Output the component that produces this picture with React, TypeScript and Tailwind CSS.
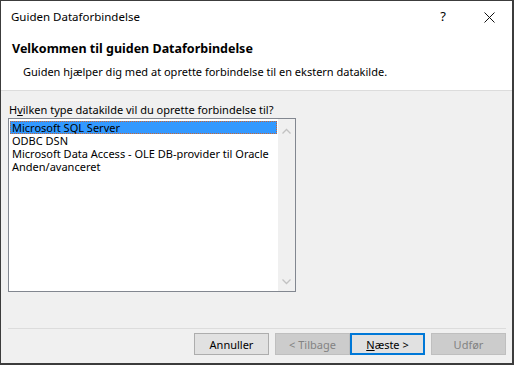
import React from "react";

const font = { fontFamily: '"Noto Sans", "Segoe UI", sans-serif' };

function Chevron({ up }: { up?: boolean }) {
  return (
    <svg width="9" height="6" viewBox="0 0 9 6" className="block">
      <path
        d={up ? "M0.5 5.5 L4.5 1.5 L8.5 5.5" : "M0.5 0.5 L4.5 4.5 L8.5 0.5"}
        fill="none"
        stroke="#c2c2c2"
        strokeWidth="1.3"
      />
    </svg>
  );
}

export default function App() {
  const items = [
    "Microsoft SQL Server",
    "ODBC DSN",
    "Microsoft Data Access - OLE DB-provider til Oracle",
    "Anden/avanceret",
  ];
  return (
    <div
      className="w-[514px] h-[365px] flex flex-col bg-[#f0f0f0] border-l border-t border-r-2 border-b-2 border-[#3c3c3c] text-[11px] text-black overflow-hidden"
      style={font}
    >
      {/* Title bar */}
      <div className="h-[32px] bg-white flex items-center shrink-0">
        <div className="pl-[10px] flex-1 leading-none text-[11.5px]">Guiden Dataforbindelse</div>
        <div className="w-[46px] h-full flex items-center justify-center text-[13px]">?</div>
        <div className="w-[46px] h-full flex items-center justify-center">
          <svg width="11" height="11" viewBox="0 0 11 11">
            <path d="M0.5 0.5 L10.5 10.5 M10.5 0.5 L0.5 10.5" stroke="#111" strokeWidth="1" />
          </svg>
        </div>
      </div>
      {/* Header */}
      <div className="h-[58px] bg-white border-b border-[#dcdcdc] shrink-0 flex flex-col">
        <div className="pl-[11px] pt-[8px] font-bold text-[12.5px] leading-[16px]">
          Velkommen til guiden Dataforbindelse
        </div>
        <div className="pl-[22px] pt-[7px] leading-[16px]">
          Guiden hjælper dig med at oprette forbindelse til en ekstern datakilde.
        </div>
      </div>
      {/* Body */}
      <div className="flex-1 flex flex-col pl-[7px] pr-[6px]">
        <div className="pt-[12px] pl-[1px] leading-[14px]">
          H<span className="underline">v</span>ilken type datakilde vil du oprette forbindelse til?
        </div>
        <div className="mt-[1px] w-[288px] h-[174px] border border-[#828790] bg-white flex">
          <div className="flex-1 min-w-0 pt-[2px] pl-[1px] pr-[1px]">
            {items.map((it, i) => (
              <div
                key={it}
                className={
                  "h-[13px] leading-[13px] pl-[2px] whitespace-nowrap overflow-hidden " +
                  (i === 0
                    ? "bg-[#3399ff] outline-1 outline-dotted outline-[#cc6633] -outline-offset-1"
                    : "")
                }
              >
                {it}
              </div>
            ))}
          </div>
          <div className="w-[17px] bg-[#f0f0f0] flex flex-col items-center justify-between pt-[9px] pb-[6px]">
            <Chevron up />
            <Chevron />
          </div>
        </div>
        <div className="mt-[36px] h-px bg-[#dcdcdc]" />
        <div className="flex justify-end gap-[6px] pt-[4px]">
          <button className="w-[75px] h-[22px] bg-[#e1e1e1] border border-[#adadad] leading-none">
            Annuller
          </button>
          <button className="w-[75px] h-[22px] bg-[#cccccc] border border-[#bfbfbf] text-[#838383] leading-none">
            &lt; Tilbage
          </button>
          <button className="-ml-[6px] w-[75px] h-[22px] bg-[#e1e1e1] border-2 border-[#0078d7] leading-none">
            <span className="underline">N</span>æste &gt;
          </button>
          <button className="w-[75px] h-[22px] bg-[#cccccc] border border-[#bfbfbf] text-[#838383] leading-none">
            Udfør
          </button>
        </div>
      </div>
    </div>
  );
}
